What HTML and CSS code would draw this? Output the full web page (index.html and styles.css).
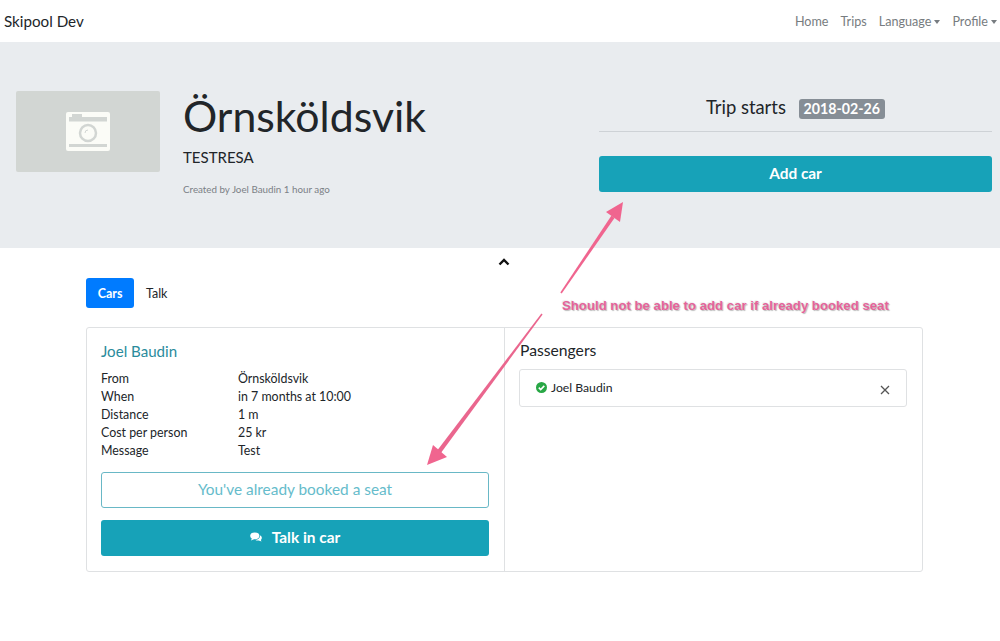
FILE: index.html
```html
<!DOCTYPE html>
<html lang="en">
<head>
<meta charset="utf-8">
<title>Skipool Dev</title>
<link rel="stylesheet" href="styles.css">
</head>
<body>
<nav class="navbar">
  <a class="brand">Skipool Dev</a>
  <ul class="nav-links">
    <li>Home</li>
    <li>Trips</li>
    <li class="dropdown">Language</li>
    <li class="dropdown">Profile</li>
  </ul>
</nav>
<header class="hero">
  <div class="thumb">
    <svg class="thumb-icon" width="44" height="39" viewBox="0 0 44 39">
      <rect width="44" height="39" rx="2" fill="#fbfcf7"/>
      <rect x="3" y="5" width="38" height="4.500" fill="#d2d6d3"/>
      <rect x="6" y="2" width="10" height="3" fill="#d2d6d3"/>
      <rect x="3" y="32" width="38" height="3" fill="#d2d6d3"/>
      <circle cx="22" cy="21" r="8" fill="none" stroke="#d2d6d3" stroke-width="2.500"/>
      <path d="M19 21a3 3 0 0 1 3-3" fill="none" stroke="#d2d6d3" stroke-width="1"/>
    </svg>
  </div>
  <div class="trip-info">
    <h1 class="trip-title">Örnsköldsvik</h1>
    <p class="trip-sub">TESTRESA</p>
    <small class="trip-meta">Created by Joel Baudin 1 hour ago</small>
  </div>
  <div class="trip-side">
    <div class="trip-starts">Trip starts <span class="badge">2018-02-26</span></div>
    <hr class="rule">
    <button class="btn btn-info btn-block">Add car</button>
  </div>
</header>
<main class="content">
  <div class="collapse-toggle">
    <svg width="12" height="8" viewBox="0 0 12 8"><path d="M1.500 6.500 6 2l4.500 4.500" fill="none" stroke="#111" stroke-width="2.400"/></svg>
  </div>
  <div class="tabs">
    <a class="tab tab-active">Cars</a>
    <a class="tab">Talk</a>
  </div>
  <section class="card">
    <div class="car">
      <h2 class="driver">Joel Baudin</h2>
      <dl class="facts">
        <dt>From</dt><dd>Örnsköldsvik</dd>
        <dt>When</dt><dd>in 7 months at 10:00</dd>
        <dt>Distance</dt><dd>1 m</dd>
        <dt>Cost per person</dt><dd>25 kr</dd>
        <dt>Message</dt><dd>Test</dd>
      </dl>
      <button class="btn btn-outline btn-block">You've already booked a seat</button>
      <button class="btn btn-info btn-block">
        <svg class="chat-icon" width="12" height="10" viewBox="0 0 12 10"><ellipse cx="4.800" cy="3.800" rx="4.600" ry="3.400" fill="#fff"/><path d="M2 6 1 8.500 4.500 7z" fill="#fff"/><path d="M10 3.200c1.400.8 2 1.800 1.800 3-.1.800-.6 1.300-1 1.700l.7 1.700-2.800-1.100c-1.400.2-2.700-.1-3.500-.8 2.800.1 5.300-1.700 4.800-4.500z" fill="#fff"/></svg>
        Talk in car
      </button>
    </div>
    <div class="passengers">
      <h3 class="passengers-title">Passengers</h3>
      <div class="passenger">
        <svg width="11" height="11" viewBox="0 0 11 11"><circle cx="5.500" cy="5.500" r="5.500" fill="#28a745"/><path d="M2.800 5.600 4.700 7.500 8.300 3.900" fill="none" stroke="#fff" stroke-width="1.600"/></svg>
        <span class="passenger-name">Joel Baudin</span>
        <svg class="remove" width="10" height="10" viewBox="0 0 10 10"><path d="M1 1l8 8M9 1 1 9" stroke="#555" stroke-width="1.300"/></svg>
      </div>
    </div>
  </section>
</main>
<svg class="annotation-arrows" width="1000" height="641" viewBox="0 0 1000 641">
  <path d="M560.300 292.500 561.700 293.500 614.500 218 611.500 215.500z" fill="#f0658f"/>
  <path d="M623 202 606 212 620 222z" fill="#f0658f"/>
  <path d="M541.400 313.500 542.600 314.500 440.500 453.500 437 450.800z" fill="#ea668e"/>
  <path d="M427 465 433 445 447 457z" fill="#f0658f"/>
</svg>
<p class="annotation-text">Should not be able to add car if already booked seat</p>
</body>
</html>
```
FILE: styles.css
```css
* { box-sizing: border-box; }
html, body { margin: 0; padding: 0; }
body {
  position: relative;
  width: 1000px;
  height: 641px;
  overflow: hidden;
  background: #fff;
  color: #212529;
  font-family: Lato, "Noto Sans", sans-serif;
  font-size: 13px;
}
.navbar {
  height: 42px;
  display: flex;
  align-items: center;
  justify-content: space-between;
  padding: 0 3px 0 4px;
}
.brand { font-size: 15.200px; color: #212529; }
.nav-links {
  display: flex;
  gap: 12px;
  list-style: none;
  margin: 0;
  padding: 0;
  color: #777c80;
  font-size: 12.600px;
}
.dropdown::after {
  content: "";
  display: inline-block;
  margin-left: 3px;
  vertical-align: 2px;
  border-top: 4px solid #777c80;
  border-left: 3.500px solid transparent;
  border-right: 3.500px solid transparent;
}
.hero {
  height: 206px;
  background: #e9ecef;
  display: flex;
  padding: 49px 8px 0 16px;
}
.thumb {
  width: 144px;
  height: 81px;
  background: #d2d6d3;
  border-radius: 2px;
  display: flex;
  align-items: center;
  justify-content: center;
  flex: none;
}
.trip-info { width: 439px; padding-left: 23px; flex: none; }
.trip-title {
  margin: 0;
  font-size: 42.800px;
  font-weight: 400;
  line-height: 50px;
}
.trip-sub { margin: 7px 0 0; font-size: 15px; line-height: 19px; }
.trip-meta { display: block; margin-top: 16px; color: #7b8086; font-size: 9.800px; line-height: 12px; }
.trip-side { flex: 1; }
.trip-starts {
  text-align: center;
  font-size: 18.400px;
  line-height: 34px;
  margin-top: -1px;
}
.badge {
  display: inline-block;
  margin-left: 8px;
  padding: 0 5px;
  background: #868e96;
  color: #fff;
  border-radius: 3px;
  font-size: 14.200px;
  font-weight: 700;
  line-height: 20px;
  vertical-align: 0;
}
.rule { margin: 7px 0 24px; border: 0; border-top: 1px solid #ced2d6; }
.btn {
  display: flex;
  align-items: center;
  justify-content: center;
  height: 36px;
  border-radius: 3px;
  font-family: inherit;
  font-size: 15.400px;
  padding: 0 0 3px;
}
.btn-block { width: 100%; }
.btn-info { background: #17a2b8; border: 0; color: #fff; font-weight: 700; }
.btn-outline { background: #fff; border: 1px solid #69b8c6; color: #66bccb; }
.content { padding: 0 77px 0 86px; }
.collapse-toggle { height: 30px; display: flex; justify-content: center; padding: 10px 2px 0 0; }
.tabs { display: flex; height: 30px; }
.tab {
  display: flex;
  align-items: center;
  padding: 0 12px;
  border-radius: 3px;
  font-size: 12.500px;
  color: #212529;
}
.tab-active { width: 48px; background: #007bff; color: #fff; font-weight: 700; justify-content: center; padding: 0; }
.card {
  display: flex;
  margin-top: 19px;
  height: 245px;
  border: 1px solid #dfe1e3;
  border-radius: 3px;
}
.car {
  width: 418px;
  padding: 13px 15px 0 14px;
  border-right: 1px solid #dfe1e3;
  flex: none;
}
.driver { margin: 0; font-size: 15.100px; font-weight: 400; color: #2a8b9c; line-height: 20px; }
.facts {
  display: grid;
  grid-template-columns: 137px 1fr;
  grid-auto-rows: 18px;
  margin: 9px 0 12px;
  font-size: 12.400px;
  line-height: 18px;
}
.facts dt, .facts dd { margin: 0; }
.car .btn + .btn { margin-top: 12px; }
.chat-icon { margin-right: 10px; }
.passengers { flex: 1; padding: 13px 15px 0 14px; }
.passengers-title { margin: 0 0 9px 1px; font-size: 15.700px; font-weight: 400; line-height: 19px; }
.passenger {
  display: flex;
  align-items: center;
  height: 38px;
  padding: 0 16px 2px;
  border: 1px solid #dfe1e3;
  border-radius: 3px;
  font-size: 12.200px;
}
.passenger-name { margin-left: 4px; flex: 1; }
.remove { margin-top: 5px; }
.annotation-arrows { position: absolute; left: 0; top: 0; pointer-events: none; }
.annotation-text {
  position: absolute;
  left: 562px;
  top: 298px;
  margin: 0;
  font-family: "Liberation Sans", sans-serif;
  font-size: 13.200px;
  font-weight: 700;
  line-height: 16px;
  white-space: nowrap;
  color: #e5639a;
  text-shadow: 1px 1px 1px #bbb, -1px -1px 1px #eee;
}
```
